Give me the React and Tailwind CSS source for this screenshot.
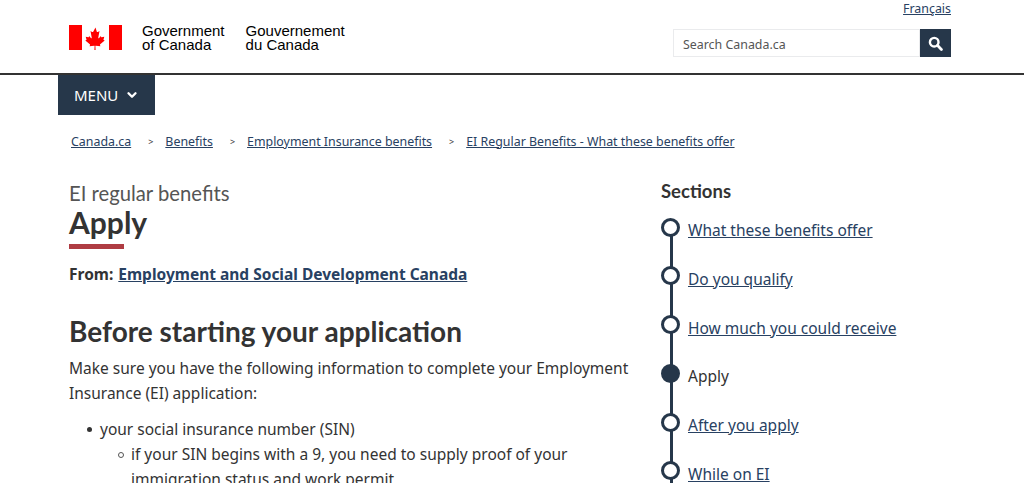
import { ChevronDown } from "lucide-react";

const sections = [
  { label: "What these benefits offer", href: "#" },
  { label: "Do you qualify", href: "#" },
  { label: "How much you could receive", href: "#" },
  { label: "Apply", active: true },
  { label: "After you apply", href: "#" },
  { label: "While on EI", href: "#" },
];

const crumbs = [
  "Canada.ca",
  "Benefits",
  "Employment Insurance benefits",
  "EI Regular Benefits - What these benefits offer",
];

function Flag() {
  return (
    <svg width="53" height="25" viewBox="0 0 53 25" aria-hidden="true">
      <rect x="0" y="0" width="13" height="25" fill="#f00" />
      <rect x="40" y="0" width="13" height="25" fill="#f00" />
      <path
        fill="#f00"
        d="M26.5 2.5l-2.3 4.2c-.3.5-.7.4-1.1.2l-1.6-.9 1.2 6.4c.2 1-.5 1-.8.6l-1.8-2-.3 1c0 .2-.2.3-.5.3l-2.6-.5.7 2.5c.1.4.2.7-.2.8l-.9.4 4.5 3.7c.2.2.3.4.2.7l-.4 1.3 4.6-.5c.2 0 .4.1.4.3l-.2 4.4h1.2l-.2-4.4c0-.2.2-.3.4-.3l4.6.5-.4-1.3c-.1-.3 0-.5.2-.7l4.5-3.7-.9-.4c-.4-.1-.3-.4-.2-.8l.7-2.5-2.6.5c-.3 0-.5-.1-.5-.3l-.3-1-1.8 2c-.3.4-1 .4-.8-.6l1.2-6.4-1.6.9c-.4.2-.8.3-1.1-.2z"
      />
    </svg>
  );
}

function SearchGlyph() {
  return (
    <svg width="15" height="15" viewBox="0 0 15 15" fill="none" stroke="currentColor" aria-hidden="true">
      <circle cx="6.2" cy="6.2" r="4.3" strokeWidth="2.4" />
      <path d="M9.6 9.6l3.8 3.8" strokeWidth="2.8" strokeLinecap="round" />
    </svg>
  );
}

export default function App() {
  return (
    <div className="h-[483px] overflow-hidden bg-white font-['Noto_Sans','Open_Sans',sans-serif] text-[#333]">
      <header className="h-[75px] border-b-2 border-[#333]">
        <div className="flex justify-between pl-[69px] pr-[73px]">
          <div className="flex items-start pt-[25px]">
            <Flag />
            <div className="ml-[20px] -mt-[1px] font-['Liberation_Sans',sans-serif] text-[15px] leading-[14px] text-black">
              Government
              <br />
              of Canada
            </div>
            <div className="ml-[21px] -mt-[1px] font-['Liberation_Sans',sans-serif] text-[15px] leading-[14px] text-black">
              Gouvernement
              <br />
              du Canada
            </div>
          </div>
          <div className="flex w-[278px] flex-col items-end">
            <a href="#" className="text-[12.4px] leading-[18px] text-[#284162] underline">
              Français
            </a>
            <div className="mt-[11px] flex h-[28px] w-full">
              <div className="flex flex-1 items-center border border-[#eaebed] pl-[9px] pt-[4px] text-[12.4px] text-[#555]">
                Search Canada.ca
              </div>
              <div className="flex w-[31px] items-center justify-center bg-[#26374a] text-white">
                <SearchGlyph />
              </div>
            </div>
          </div>
        </div>
      </header>

      <div className="pl-[58px]">
        <button className="flex h-[40px] w-[97px] items-center gap-[7px] bg-[#26374a] pl-[16px] text-[15px] text-white">
          MENU
          <ChevronDown size={14} strokeWidth={4} />
        </button>
      </div>

      <nav className="mt-[17px] flex h-[20px] items-center pl-[71px] text-[12.4px] text-[#284162]">
        {crumbs.map((c, i) => (
          <span key={c} className="flex items-center">
            {i > 0 && <span className="ml-[17px] mr-[12px] text-[9px] text-[#333]">&gt;</span>}
            <a href="#" className="underline">
              {c}
            </a>
          </span>
        ))}
      </nav>

      <main className="mt-[29px] flex pl-[69px]">
        <div className="mr-[22px] w-[570px] shrink-0">
          <div className="font-['Lato',sans-serif] text-[20.25px] leading-[24px] text-[#555]">EI regular benefits</div>
          <h1 className="font-['Lato',sans-serif] text-[30px] font-bold leading-[34px] text-[#333]">Apply</h1>
          <div className="mt-[5px] h-[5px] w-[55px] bg-[#af3c43]" />
          <p className="mt-[14px] text-[15.5px] font-bold leading-[22px]">
            From:{" "}
            <a href="#" className="ml-[1px] text-[#284162] underline">
              Employment and Social Development Canada
            </a>
          </p>
          <h2 className="mt-[29px] font-['Lato',sans-serif] text-[28px] font-bold leading-[34px]">
            Before starting your application
          </h2>
          <p className="mt-[8px] text-[15.5px] leading-[25px]">
            Make sure you have the following information to complete your Employment Insurance (EI) application:
          </p>
          <ul className="mt-[11px] text-[15.5px] leading-[25px]">
            <li className="flex">
              <span className="w-[31px] shrink-0 pl-[18px] pt-[10px]">
                <span className="block h-[5px] w-[5px] rounded-full bg-[#333]" />
              </span>
              <div>
                your social insurance number (SIN)
                <ul>
                  <li className="flex">
                    <span className="w-[31px] shrink-0 pl-[18px] pt-[10px]">
                      <span className="block h-[6px] w-[6px] rounded-full border border-[#555]" />
                    </span>
                    <div>if your SIN begins with a 9, you need to supply proof of your immigration status and work permit</div>
                  </li>
                </ul>
              </div>
            </li>
          </ul>
        </div>

        <aside className="w-[300px]">
          <h2 className="-mt-[1px] font-['Lato',sans-serif] text-[18.5px] font-bold leading-[22px]">Sections</h2>
          <ol className="relative mt-[15px]">
            <div className="absolute bottom-0 left-[9px] top-[8px] w-[3px] bg-[#26374a]" />
            {sections.map((s) => (
              <li key={s.label} className="relative flex h-[48.8px] items-start">
                <span
                  className={`mt-[0.5px] h-[19px] w-[19px] rounded-full border-[3px] border-[#26374a] ${
                    s.active ? "bg-[#26374a]" : "bg-white"
                  }`}
                />
                <span className="ml-[8px] mt-[2px] text-[15.5px] leading-[22px]">
                  {s.href ? (
                    <a href={s.href} className="text-[#284162] underline">
                      {s.label}
                    </a>
                  ) : (
                    s.label
                  )}
                </span>
              </li>
            ))}
          </ol>
        </aside>
      </main>
    </div>
  );
}
